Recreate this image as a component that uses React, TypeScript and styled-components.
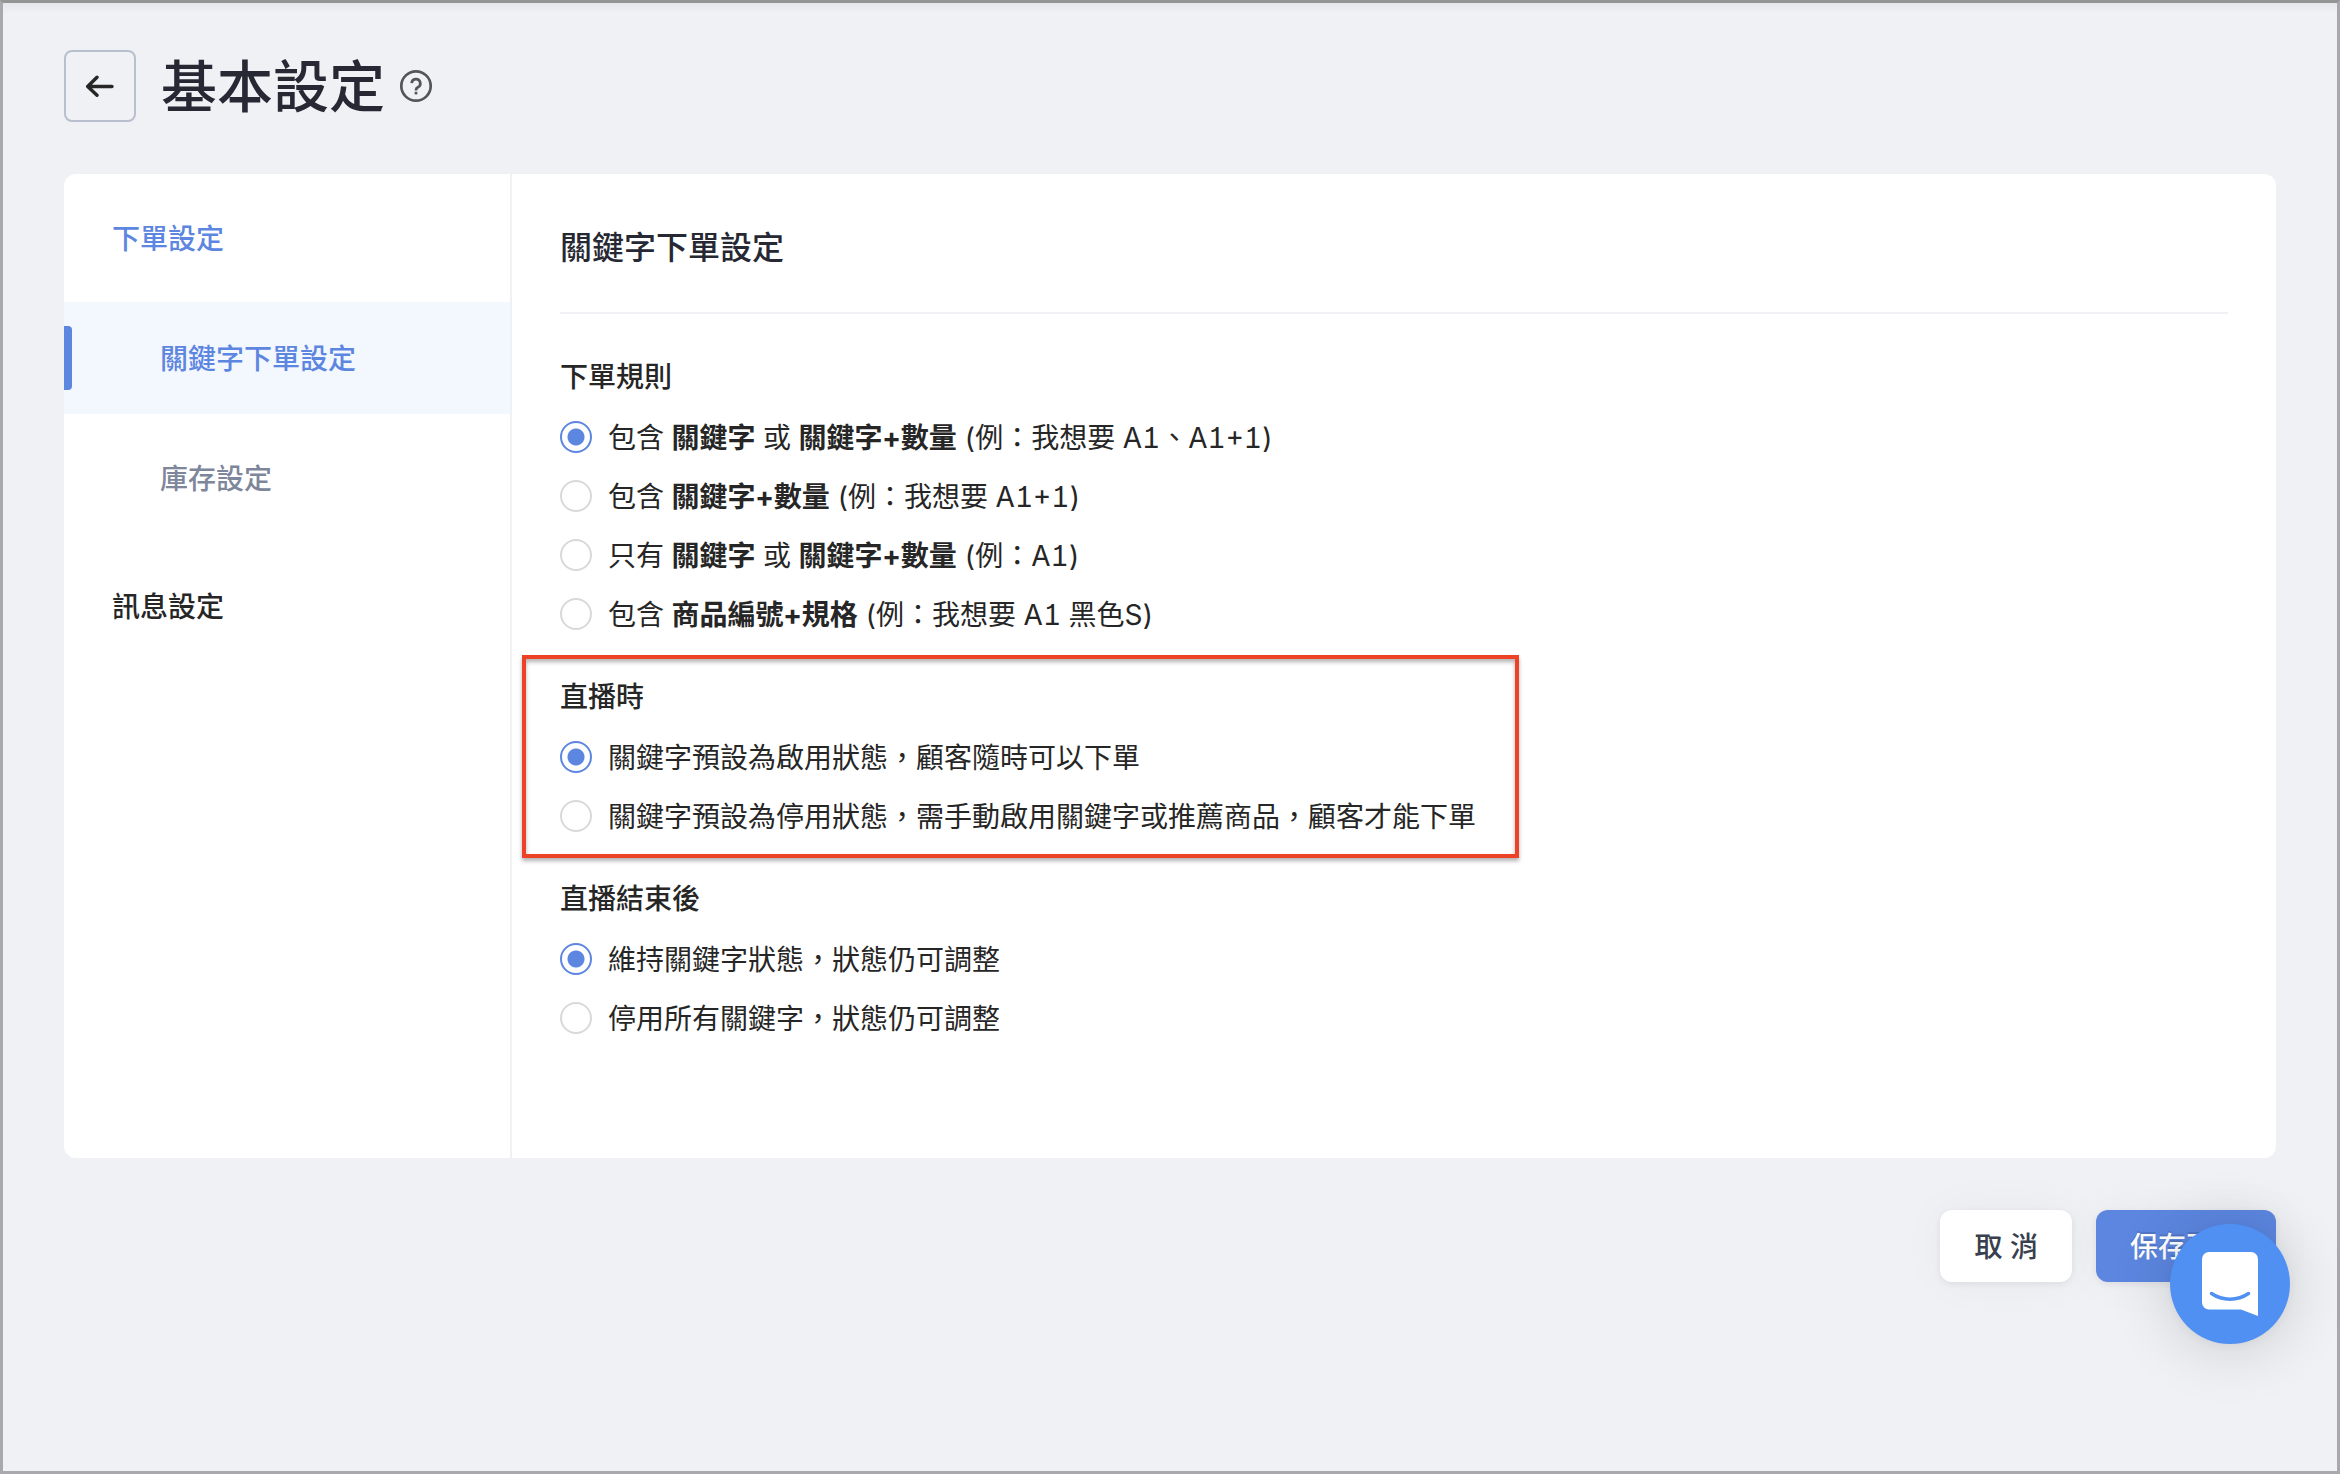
import React, { useState } from "react";
import styled, { createGlobalStyle, css } from "styled-components";

const Global = createGlobalStyle`
  *, *::before, *::after { box-sizing: border-box; }
  body {
    margin: 0;
    background: #f0f1f5;
    color: #262626;
    font-family: Inter, "Noto Sans CJK TC", sans-serif;
    font-size: 28px;
    line-height: 44px;
    font-feature-settings: "tnum", "cv01";
  }
  button, input { font: inherit; }
`;

const Page = styled.div`
  min-height: 100vh;
  padding: 47px 61px;
  border: 3px solid #a8a8ad;
  border-top-color: #949495;
  background: linear-gradient(#e6e7ea, #f0f1f5 10px);
`;

const Header = styled.header`
  display: flex;
  align-items: center;
  height: 72px;
  margin-bottom: 52px;
`;

const BackButton = styled.button`
  display: grid;
  place-items: center;
  width: 72px;
  height: 72px;
  padding: 0;
  border: 2px solid #b8bfce;
  border-radius: 8px;
  background: transparent;
  color: #262626;
  cursor: pointer;
`;

const Title = styled.h1`
  margin: 0 14px 0 25px;
  padding-top: 2px;
  color: #262833;
  font-size: 56px;
  line-height: 72px;
  font-weight: 500;
`;

const HelpButton = styled.button`
  display: grid;
  padding: 0;
  border: 0;
  background: none;
  color: #555;
  cursor: pointer;
`;

const Card = styled.div`
  display: grid;
  grid-template-columns: 448px 1fr;
  min-height: 984px;
  border-radius: 12px;
  background: #fff;
`;

const Sidebar = styled.nav`
  display: flex;
  flex-direction: column;
  gap: 16px;
  padding: 8px 0;
  border-right: 2px solid #f0f1f5;
`;

const MenuGroup = styled.div`
  display: flex;
  flex-direction: column;
  gap: 8px;
`;

const MenuLink = styled.a<{ $nested?: boolean; $tone: string; $current?: boolean }>`
  position: relative;
  display: flex;
  align-items: center;
  height: 112px;
  padding-top: 2px;
  padding-left: ${(p) => (p.$nested ? 96 : 48)}px;
  color: ${(p) => p.$tone};
  font-weight: 500;
  text-decoration: none;
  ${(p) =>
    p.$current &&
    css`
      background: #f3f7fe;
      &::before {
        content: "";
        position: absolute;
        left: 0;
        top: 24px;
        width: 8px;
        height: 64px;
        border-radius: 0 4px 4px 0;
        background: #5c86e0;
      }
    `}
`;

const Content = styled.main`
  padding: 48px;
`;

const SectionTitle = styled.h2`
  margin: 0 0 40px;
  padding: 2px 0 40px;
  border-bottom: 2px solid #f0f1f5;
  color: #262833;
  font-size: 32px;
  line-height: 48px;
  font-weight: 500;
`;

const Form = styled.form`
  display: flex;
  flex-direction: column;
  align-items: flex-start;
  gap: 38px;
`;

const GroupArea = styled.div`
  position: relative;
`;

const Group = styled.fieldset`
  margin: 0;
  padding: 0;
  border: 0;
`;

const Legend = styled.legend`
  margin-bottom: 15px;
  padding: 1px 0;
  font-weight: 500;
`;

const Options = styled.div`
  display: grid;
  gap: 15px;
`;

const Option = styled.label`
  display: flex;
  align-items: center;
  gap: 16px;
  height: 44px;
  cursor: pointer;

  b { font-weight: 700; }
`;

const OptionText = styled.span`
  padding-top: 2px;
`;

const Radio = styled.input`
  appearance: none;
  flex: none;
  width: 32px;
  height: 32px;
  margin: 0;
  border: 2px solid #d9d9d9;
  border-radius: 50%;
  background: #fff;

  &:checked {
    border-color: #5c86e0;
    background: radial-gradient(circle, #5c86e0 8px, #fff 9px);
  }
`;

const Highlight = styled.div`
  position: absolute;
  inset: -19px -43px -20px -38px;
  border: 4px solid #ee4227;
  box-shadow: 0 3px 4px rgba(0, 0, 0, 0.3), inset 0 3px 4px rgba(0, 0, 0, 0.3);
  pointer-events: none;
`;

const Footer = styled.footer`
  display: flex;
  justify-content: flex-end;
  gap: 24px;
  margin-top: 52px;
`;

const ActionButton = styled.button<{ $primary?: boolean }>`
  height: 72px;
  padding: 2px 34px 0;
  border: 0;
  border-radius: 12px;
  background: ${(p) => (p.$primary ? "#5c86e0" : "#fff")};
  color: ${(p) => (p.$primary ? "#fff" : "#393f4e")};
  font-weight: 500;
  box-shadow: 0 2px 6px rgba(38, 40, 51, 0.08), 0 0 48px rgba(38, 40, 51, 0.04);
  text-shadow: ${(p) => (p.$primary ? "0 -2px 0 rgba(0, 0, 0, 0.12)" : "none")};
  cursor: pointer;
`;

const Launcher = styled.button`
  position: fixed;
  right: 50px;
  bottom: 130px;
  display: grid;
  place-items: center;
  width: 120px;
  height: 120px;
  padding: 0;
  border: 0;
  border-radius: 50%;
  background: #4f90f2;
  box-shadow: 0 2px 12px rgba(0, 0, 0, 0.06), 0 4px 64px rgba(0, 0, 0, 0.16);
  cursor: pointer;
`;

type Choice = { id: string; label: React.ReactNode };
type GroupProps = { name: string; title: string; choices: Choice[]; highlighted?: boolean };

const groups: GroupProps[] = [
  {
    name: "rule",
    title: "下單規則",
    choices: [
      { id: "any", label: <>包含 <b>關鍵字</b> 或 <b>關鍵字+數量</b> (例：我想要 A1、A1+1)</> },
      { id: "qty", label: <>包含 <b>關鍵字+數量</b> (例：我想要 A1+1)</> },
      { id: "only", label: <>只有 <b>關鍵字</b> 或 <b>關鍵字+數量</b> (例：A1)</> },
      { id: "sku", label: <>包含 <b>商品編號+規格</b> (例：我想要 A1 黑色S)</> },
    ],
  },
  {
    name: "live",
    title: "直播時",
    highlighted: true,
    choices: [
      { id: "on", label: "關鍵字預設為啟用狀態，顧客隨時可以下單" },
      { id: "off", label: "關鍵字預設為停用狀態，需手動啟用關鍵字或推薦商品，顧客才能下單" },
    ],
  },
  {
    name: "after",
    title: "直播結束後",
    choices: [
      { id: "keep", label: "維持關鍵字狀態，狀態仍可調整" },
      { id: "stop", label: "停用所有關鍵字，狀態仍可調整" },
    ],
  },
];

function RadioGroup({ name, title, choices, highlighted }: GroupProps) {
  const [value, setValue] = useState(choices[0].id);
  return (
    <GroupArea>
      <Group>
        <Legend>{title}</Legend>
        <Options>
          {choices.map((c) => (
            <Option key={c.id} htmlFor={`${name}-${c.id}`}>
              <Radio
                type="radio"
                id={`${name}-${c.id}`}
                name={name}
                checked={value === c.id}
                onChange={() => setValue(c.id)}
              />
              <OptionText>{c.label}</OptionText>
            </Option>
          ))}
        </Options>
      </Group>
      {highlighted && <Highlight />}
    </GroupArea>
  );
}

export default function App() {
  return (
    <Page lang="zh-Hant">
      <Global />
      <Header>
        <BackButton type="button" aria-label="返回">
          <svg width="30" height="22" viewBox="0 0 30 22" fill="none" stroke="currentColor" strokeWidth="3.400" strokeLinecap="round" strokeLinejoin="round">
            <path d="M27 11.500H3M12 2.200L2.700 11.500L12 20.300" />
          </svg>
        </BackButton>
        <Title>基本設定</Title>
        <HelpButton type="button" aria-label="說明">
          <svg width="34" height="34" viewBox="0 0 34 34" fill="none" stroke="currentColor" strokeWidth="2.700">
            <circle cx="17" cy="17" r="14.700" />
            <path d="M12.700 14.200a4.300 4.300 0 1 1 6.200 4.100c-1.300.6-1.900 1.300-1.900 2.700v.4" />
            <path d="M17 22.800v2.600" />
          </svg>
        </HelpButton>
      </Header>
      <Card>
        <Sidebar>
          <MenuGroup>
            <MenuLink href="#order" $tone="#5c86e0">下單設定</MenuLink>
            <MenuLink href="#keyword" $tone="#5c86e0" $nested $current aria-current="page">關鍵字下單設定</MenuLink>
            <MenuLink href="#stock" $tone="#7e869b" $nested>庫存設定</MenuLink>
          </MenuGroup>
          <MenuGroup>
            <MenuLink href="#message" $tone="#262626">訊息設定</MenuLink>
          </MenuGroup>
        </Sidebar>
        <Content>
          <SectionTitle>關鍵字下單設定</SectionTitle>
          <Form>
            {groups.map((g) => (
              <RadioGroup key={g.name} {...g} />
            ))}
          </Form>
        </Content>
      </Card>
      <Footer>
        <ActionButton type="button">取 消</ActionButton>
        <ActionButton type="button" $primary>保存更改</ActionButton>
      </Footer>
      <Launcher type="button" aria-label="開啟客服訊息">
        <svg width="56" height="64" viewBox="0 0 56 64">
          <path fill="#fff" d="M7 0h42a7 7 0 0 1 7 7v57l-17-6.500H7a7 7 0 0 1-7-7V7a7 7 0 0 1 7-7z" />
          <path d="M9.500 41.500c11 7.500 26 7.500 37 0" fill="none" stroke="#4f90f2" strokeWidth="3.500" strokeLinecap="round" />
        </svg>
      </Launcher>
    </Page>
  );
}
